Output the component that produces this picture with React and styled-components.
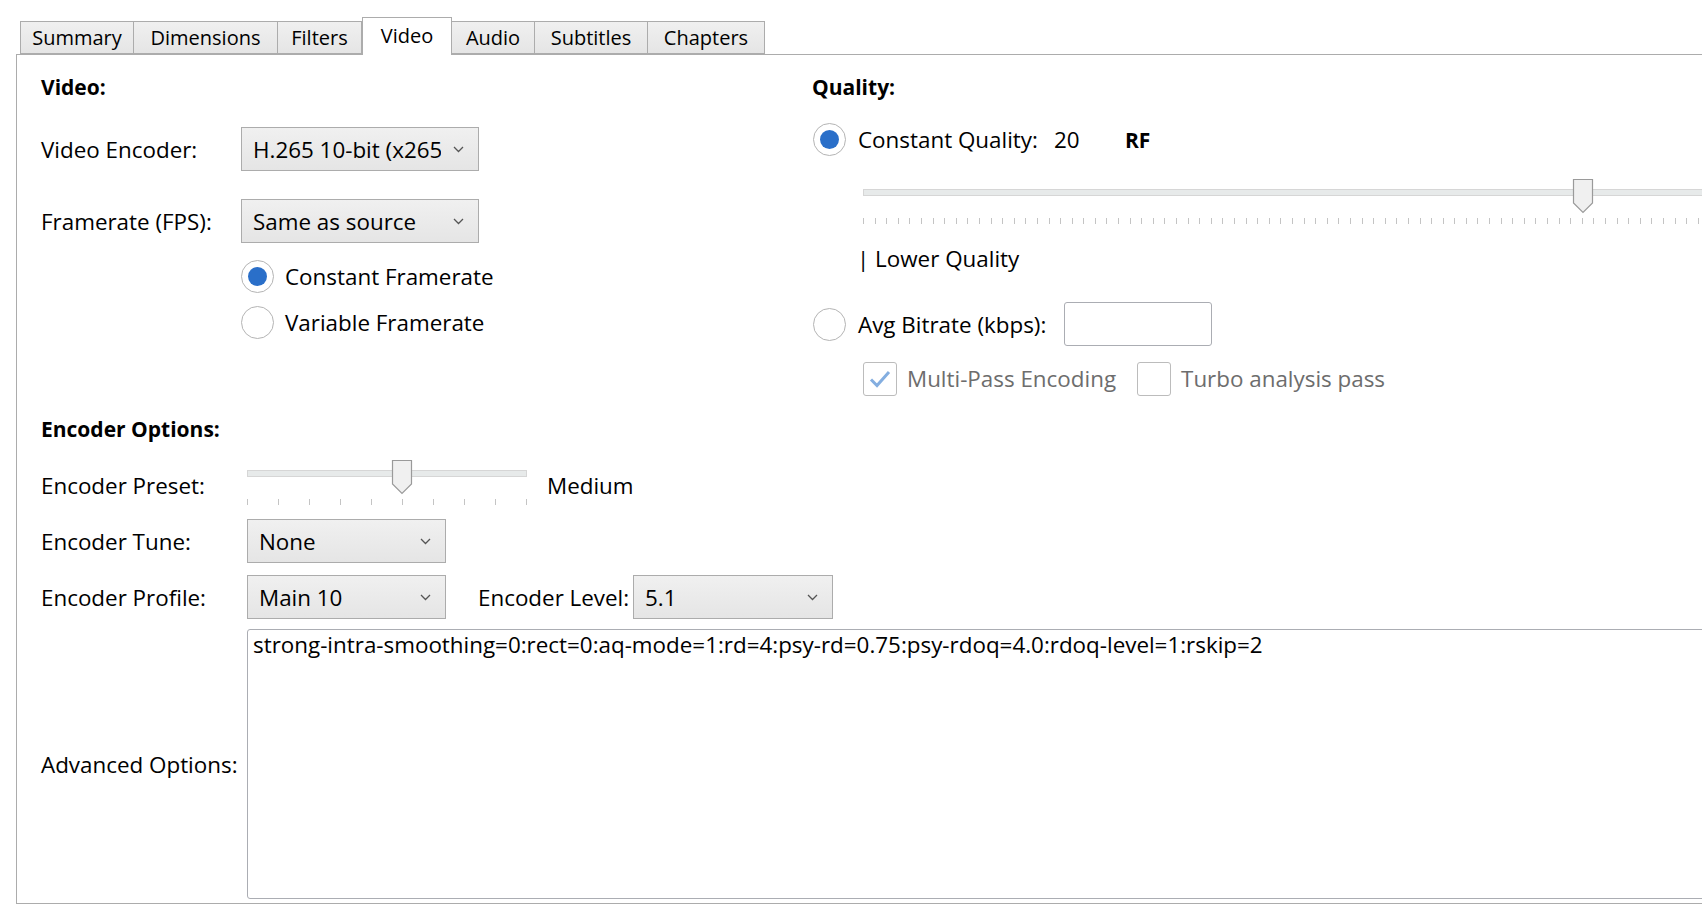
import React from 'react';
import styled, { createGlobalStyle } from 'styled-components';

const GlobalStyle = createGlobalStyle`
  html,
  body {
    margin: 0;
    padding: 0;
    background: #fff;
    overflow: hidden;
  }
  body {
    font-family: 'Open Sans', 'Noto Sans', 'Liberation Sans', sans-serif;
    font-size: 22.4px;
    color: #000;
  }
`;

const Window = styled.div`
  width: 1702px;
  height: 912px;
  box-sizing: border-box;
  padding: 17px 0 0 16px;
  overflow: hidden;
`;

const TabStrip = styled.div`
  display: flex;
  align-items: flex-end;
  height: 37px;
  padding-left: 4px;
  position: relative;
  z-index: 1;
`;

const Tab = styled.div`
  box-sizing: border-box;
  width: ${(p) => p.$w}px;
  height: ${(p) => (p.$active ? 38 : 33)}px;
  margin-bottom: ${(p) => (p.$active ? -1 : 0)}px;
  display: flex;
  align-items: center;
  justify-content: center;
  padding-bottom: ${(p) => (p.$active ? 3 : 0)}px;
  border: 1px solid #acacac;
  border-bottom: ${(p) => (p.$active ? 'none' : '1px solid #acacac')};
  border-left-width: ${(p) => (p.$first || p.$active ? 1 : 0)}px;
  background: ${(p) =>
    p.$active ? '#fff' : 'linear-gradient(#f0f0f0, #e5e5e5)'};
  font-size: 20px;
  white-space: nowrap;
`;

const Panel = styled.div`
  box-sizing: border-box;
  width: 1720px;
  height: 850px;
  border: 1px solid #acacac;
  padding: 0 24px;
  background: #fff;
`;

const TopGrid = styled.div`
  display: grid;
  grid-template-columns: 771px minmax(0, 1fr);
`;

const Column = styled.div`
  display: flex;
  flex-direction: column;
  padding-top: 18px;
  min-width: 0;
`;

const Heading = styled.div`
  font-weight: 700;
  font-size: 21px;
  height: 28px;
  line-height: 28px;
  margin-top: ${(p) => p.$mt || 0}px;
`;

const Row = styled.div`
  display: flex;
  align-items: center;
  height: ${(p) => p.$h}px;
  margin-top: ${(p) => p.$mt || 0}px;
  margin-left: ${(p) => p.$ml || 0}px;
`;

const Label = styled.div`
  flex: none;
  width: ${(p) => p.$w}px;
  margin-left: ${(p) => p.$ml || 0}px;
  white-space: nowrap;
  padding-top: ${(p) => p.$pt || 0}px;
`;

const Combo = styled.div`
  box-sizing: border-box;
  flex: none;
  width: ${(p) => p.$w}px;
  height: 44px;
  display: flex;
  align-items: center;
  justify-content: space-between;
  padding: 0 14px 0 11px;
  border: 1px solid #acacac;
  background: linear-gradient(#f0f0f0, #e5e5e5);
  white-space: nowrap;
  overflow: hidden;

  span {
    overflow: hidden;
    max-width: ${(p) => p.$w - 50}px;
  }
  svg {
    flex: none;
  }
`;

const RadioCircle = styled.div`
  box-sizing: border-box;
  flex: none;
  width: 33px;
  height: 33px;
  border-radius: 50%;
  border: 1.5px solid #b4b4b4;
  background: #fff;
  display: flex;
  align-items: center;
  justify-content: center;
  margin-right: ${(p) => p.$gap}px;

  &::after {
    content: '';
    display: ${(p) => (p.$on ? 'block' : 'none')};
    width: 19px;
    height: 19px;
    border-radius: 50%;
    background: #2a6fc9;
  }
`;

const CheckBox = styled.div`
  box-sizing: border-box;
  flex: none;
  width: 34px;
  height: 34px;
  border: 1.5px solid #bcbcbc;
  border-radius: 3px;
  background: #fff;
  display: flex;
  align-items: center;
  justify-content: center;
  margin-right: 10px;
`;

const Dim = styled.span`
  color: #6d6d6d;
  white-space: nowrap;
  margin-right: ${(p) => p.$mr || 0}px;
`;

const Value = styled.span`
  flex: none;
  width: ${(p) => p.$w}px;
  font-weight: ${(p) => (p.$bold ? 700 : 400)};
  font-size: ${(p) => (p.$bold ? '21px' : 'inherit')};
  white-space: nowrap;
`;

const TextBox = styled.div`
  box-sizing: border-box;
  flex: none;
  width: 148px;
  height: 44px;
  border: 1px solid #abadb3;
  border-radius: 3px;
  background: #fff;
`;

const SliderBox = styled.div`
  position: relative;
  flex: none;
  width: ${(p) => p.$w}px;
  height: 47px;
  margin-left: ${(p) => p.$ml || 0}px;
`;

const Track = styled.div`
  box-sizing: border-box;
  position: absolute;
  left: 0;
  right: 0;
  top: 11px;
  height: 7px;
  border: 1px solid #d6d6d6;
  background: #e7eaea;
`;

const TickRow = styled.div`
  position: absolute;
  left: 0;
  right: 0;
  top: 40px;
  height: 6px;
  display: flex;
  justify-content: space-between;
`;

const Tick = styled.div`
  width: 1px;
  height: 6px;
  background: #c4c4c4;
`;

const Thumb = styled.svg`
  position: absolute;
  top: 0;
  left: ${(p) => p.$x}px;
`;

const LowerQuality = styled.div`
  height: 28px;
  line-height: 28px;
  margin: 20px 0 0 45px;
  white-space: nowrap;
`;

const Advanced = styled.div`
  display: flex;
  align-items: center;
  height: 270px;
  margin-top: 10px;
`;

const OptionsBox = styled.div`
  box-sizing: border-box;
  flex: 1;
  height: 270px;
  border: 1px solid #abadb3;
  border-radius: 3px;
  padding: 1px 5px;
  line-height: 28px;
  white-space: nowrap;
  overflow: hidden;
`;

const tabs = [
  { label: 'Summary', w: 114 },
  { label: 'Dimensions', w: 144 },
  { label: 'Filters', w: 84 },
  { label: 'Video', w: 90, active: true },
  { label: 'Audio', w: 83 },
  { label: 'Subtitles', w: 113 },
  { label: 'Chapters', w: 117 },
];

function Chevron() {
  return (
    <svg width="11" height="7" viewBox="0 0 11 7">
      <path d="M1 1 L5.5 5.5 L10 1" fill="none" stroke="#555" strokeWidth="1.3" />
    </svg>
  );
}

function Dropdown({ w, value }) {
  return (
    <Combo $w={w}>
      <span>{value}</span>
      <Chevron />
    </Combo>
  );
}

function Slider({ width, thumb, ticks, ml }) {
  return (
    <SliderBox $w={width} $ml={ml}>
      <Track />
      <TickRow>
        {Array.from({ length: ticks }, (_, i) => (
          <Tick key={i} />
        ))}
      </TickRow>
      <Thumb $x={thumb - 11} width="22" height="36" viewBox="0 0 22 36">
        <path
          d="M1.5 1.5 H20.5 V25 L11 34.5 L1.5 25 Z"
          fill="#f0f0f0"
          stroke="#9a9a9a"
          strokeWidth="1.2"
        />
      </Thumb>
    </SliderBox>
  );
}

function Check({ checked }) {
  return (
    <CheckBox>
      {checked && (
        <svg width="24" height="20" viewBox="0 0 24 20">
          <path
            d="M3 10.5 L9 16.5 L21 3"
            fill="none"
            stroke="#84aee0"
            strokeWidth="3"
          />
        </svg>
      )}
    </CheckBox>
  );
}

export default function App() {
  return (
    <Window>
      <GlobalStyle />
      <TabStrip>
        {tabs.map((t, i) => (
          <Tab key={t.label} $w={t.w} $active={t.active} $first={i === 0}>
            {t.label}
          </Tab>
        ))}
      </TabStrip>
      <Panel>
        <TopGrid>
          <Column>
            <Heading>Video:</Heading>
            <Row $h={44} $mt={26}>
              <Label $w={200}>Video Encoder:</Label>
              <Dropdown w={238} value="H.265 10-bit (x265)" />
            </Row>
            <Row $h={44} $mt={28}>
              <Label $w={200}>Framerate (FPS):</Label>
              <Dropdown w={238} value="Same as source" />
            </Row>
            <Row $h={33} $ml={200} $mt={17}>
              <RadioCircle $on $gap={11} />
              Constant Framerate
            </Row>
            <Row $h={33} $ml={200} $mt={13}>
              <RadioCircle $gap={11} />
              Variable Framerate
            </Row>
          </Column>
          <Column>
            <Heading>Quality:</Heading>
            <Row $h={33} $ml={1} $mt={22}>
              <RadioCircle $on $gap={12} />
              <Value $w={196}>Constant Quality:</Value>
              <Value $w={71}>20</Value>
              <Value $w={40} $bold>
                RF
              </Value>
            </Row>
            <Row $h={47} $mt={22}>
              <Slider width={1184} thumb={720} ticks={103} ml={51} />
            </Row>
            <LowerQuality>| Lower Quality</LowerQuality>
            <Row $h={44} $ml={1} $mt={29}>
              <RadioCircle $gap={12} />
              <Value $w={206}>Avg Bitrate (kbps):</Value>
              <TextBox />
            </Row>
            <Row $h={35} $ml={51} $mt={15}>
              <Check checked />
              <Dim $mr={21}>Multi-Pass Encoding</Dim>
              <Check />
              <Dim>Turbo analysis pass</Dim>
            </Row>
          </Column>
        </TopGrid>
        <Heading $mt={19}>Encoder Options:</Heading>
        <Row $h={47} $mt={16}>
          <Label $w={206} $pt={5}>
            Encoder Preset:
          </Label>
          <Slider width={280} thumb={155} ticks={10} />
          <Label $w={120} $pt={5} $ml={20}>
            Medium
          </Label>
        </Row>
        <Row $h={44} $mt={13}>
          <Label $w={206}>Encoder Tune:</Label>
          <Dropdown w={199} value="None" />
        </Row>
        <Row $h={44} $mt={12}>
          <Label $w={206}>Encoder Profile:</Label>
          <Dropdown w={199} value="Main 10" />
          <Label $w={155} $ml={32}>
            Encoder Level:
          </Label>
          <Dropdown w={200} value="5.1" />
        </Row>
        <Advanced>
          <Label $w={206}>Advanced Options:</Label>
          <OptionsBox>
            strong-intra-smoothing=0:rect=0:aq-mode=1:rd=4:psy-rd=0.75:psy-rdoq=4.0:rdoq-level=1:rskip=2
          </OptionsBox>
        </Advanced>
      </Panel>
    </Window>
  );
}
